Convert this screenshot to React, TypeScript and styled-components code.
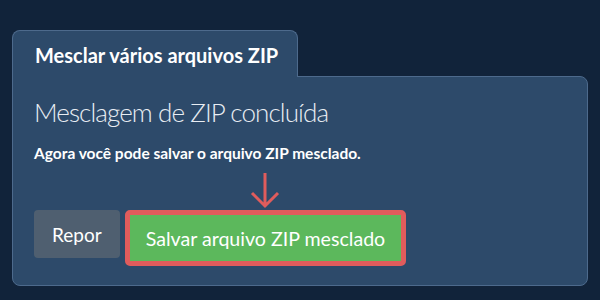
import React from 'react'
import styled, { createGlobalStyle } from 'styled-components'

const GlobalStyle = createGlobalStyle`
  html, body {
    margin: 0;
    padding: 0;
    background: #11233a;
  }
  body {
    font-family: Lato, "Open Sans", "Liberation Sans", sans-serif;
    color: #ffffff;
  }
`

const Page = styled.div`
  width: 600px;
  height: 300px;
  box-sizing: border-box;
  padding: 30px 12px 0 12px;
`

const Tab = styled.div`
  position: relative;
  z-index: 1;
  width: 286px;
  height: 47px;
  box-sizing: border-box;
  margin-bottom: -1px;
  padding: 12px 0 0 22px;
  background: #2d4a6a;
  border: 1px solid #4d6a8c;
  border-bottom: none;
  border-radius: 8px 8px 0 0;
  font-size: 20px;
  font-weight: 700;
  color: #ffffff;
`

const Panel = styled.div`
  position: relative;
  height: 210px;
  box-sizing: border-box;
  padding: 19px 20px 0 21px;
  background: #2d4a6a;
  border: 1px solid #4d6a8c;
  border-radius: 0 8px 8px 8px;
`

const Heading = styled.h2`
  margin: 0;
  font-size: 26px;
  font-weight: 300;
  letter-spacing: -0.9px;
  line-height: 32px;
  color: #e8edf3;
`

const Note = styled.p`
  margin: 16px 0 0 0;
  font-size: 15.5px;
  font-weight: 700;
  line-height: 18px;
  color: #ffffff;
`

const Actions = styled.div`
  display: flex;
  align-items: flex-start;
  gap: 5px;
  margin-top: 48px;
`

const Button = styled.button<{ $variant: 'reset' | 'save' }>`
  position: relative;
  box-sizing: border-box;
  font-family: inherit;
  font-weight: 400;
  font-size: ${p => (p.$variant === 'save' ? '19.6px' : '19px')};
  color: #ffffff;
  cursor: pointer;
  height: ${p => (p.$variant === 'save' ? '56px' : '48px')};
  padding: ${p => (p.$variant === 'save' ? '0 16px' : '0 18px')};
  background: ${p => (p.$variant === 'save' ? '#5cb85c' : '#4f5f70')};
  border: ${p => (p.$variant === 'save' ? '5px solid #e05c5c' : 'none')};
  border-radius: ${p => (p.$variant === 'save' ? '5px' : '4px')};
`

const Arrow = styled.svg`
  position: absolute;
  left: 50%;
  top: -43px;
  margin-left: -15px;
  width: 30px;
  height: 36px;
  overflow: visible;
`

export default function App() {
  return (
    <Page>
      <GlobalStyle />
      <Tab>Mesclar vários arquivos ZIP</Tab>
      <Panel>
        <Heading>Mesclagem de ZIP concluída</Heading>
        <Note>Agora você pode salvar o arquivo ZIP mesclado.</Note>
        <Actions>
          <Button $variant="reset">Repor</Button>
          <Button $variant="save">
            <Arrow viewBox="0 0 30 36">
              <path
                d="M15 1 V34 M2 21 L15 34 L28 21"
                fill="none"
                stroke="#e05c5c"
                strokeWidth="3"
              />
            </Arrow>
            Salvar arquivo ZIP mesclado
          </Button>
        </Actions>
      </Panel>
    </Page>
  )
}
